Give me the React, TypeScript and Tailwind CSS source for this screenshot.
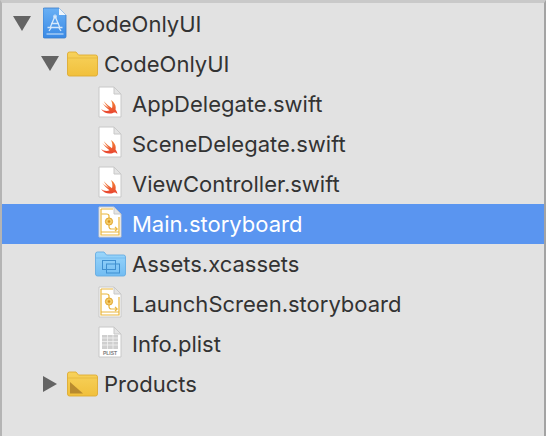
import React from 'react';

type Kind = 'project' | 'folder' | 'swift' | 'storyboard' | 'assets' | 'plist' | 'products';

interface Row {
  name: string;
  kind: Kind;
  indent: string;
  arrow?: 'down' | 'right';
  selected?: boolean;
}

const rows: Row[] = [
  { name: 'CodeOnlyUI', kind: 'project', indent: 'pl-[11px]', arrow: 'down' },
  { name: 'CodeOnlyUI', kind: 'folder', indent: 'pl-[39px]', arrow: 'down' },
  { name: 'AppDelegate.swift', kind: 'swift', indent: 'pl-[96px]' },
  { name: 'SceneDelegate.swift', kind: 'swift', indent: 'pl-[96px]' },
  { name: 'ViewController.swift', kind: 'swift', indent: 'pl-[96px]' },
  { name: 'Main.storyboard', kind: 'storyboard', indent: 'pl-[96px]', selected: true },
  { name: 'Assets.xcassets', kind: 'assets', indent: 'pl-[93px]' },
  { name: 'LaunchScreen.storyboard', kind: 'storyboard', indent: 'pl-[96px]' },
  { name: 'Info.plist', kind: 'plist', indent: 'pl-[96px]' },
  { name: 'Products', kind: 'products', indent: 'pl-[39px]', arrow: 'right' },
];

function Arrow({ dir }: { dir: 'down' | 'right' }) {
  return (
    <svg width="18" height="16" viewBox="0 0 18 16" className="shrink-0">
      {dir === 'down'
        ? <polygon points="0,0 18,0 9,15" fill="#646464" />
        : <polygon points="2,0 16,8 2,16" fill="#646464" />}
    </svg>
  );
}

function Page({ children }: { children?: React.ReactNode }) {
  return (
    <svg width="24" height="32" viewBox="0 0 24 32" className="shrink-0 mb-1">
      <path d="M1 1h15l7 7v23H1z" fill="#fff" stroke="#c8c8c8" />
      <path d="M16 1v7h7z" fill="#e4e4e4" stroke="#c8c8c8" />
      {children}
    </svg>
  );
}

function Icon({ kind }: { kind: Kind }) {
  if (kind === 'project') {
    return (
      <svg width="24" height="32" viewBox="0 0 24 32" className="shrink-0 mb-[2px]">
        <defs>
          <linearGradient id="proj" x1="0" y1="0" x2="0" y2="1">
            <stop offset="0" stopColor="#69b0f5" />
            <stop offset="1" stopColor="#3a8ae6" />
          </linearGradient>
        </defs>
        <path d="M1.500 1h14.500l7 7v21.500a1.500 1.500 0 0 1-1.500 1.500h-20a1.500 1.500 0 0 1-1.500-1.500v-28z" fill="url(#proj)" stroke="#3a7cc8" strokeWidth="0.800" />
        <path d="M16 1v7h7z" fill="#eef5fc" />
        <path d="M12 9L7 21M12 9l5 12M8 16.500h8M4.500 20.500h15M6 24l2-3M18 24l-2-3" fill="none" stroke="#d5e8fb" strokeWidth="1.300" />
        <circle cx="12" cy="9.500" r="1.500" fill="none" stroke="#d5e8fb" />
        <path d="M3.500 27h17" stroke="#d5e8fb" strokeWidth="1" />
      </svg>
    );
  }
  if (kind === 'swift') {
    return (
      <Page>
        <defs>
          <linearGradient id="swift" x1="0" y1="0" x2="0" y2="1">
            <stop offset="0" stopColor="#f58a3a" />
            <stop offset="1" stopColor="#e8402e" />
          </linearGradient>
        </defs>
        <path d="M13 14C16.500 16.500 18.500 20 17.500 23.500C19 25.500 19.500 27 19.200 28C18 26.500 16.500 26.300 15 26.900C11 28.600 6 27.300 3 23C5.500 24.800 9 25.600 11.500 24.300C8.500 22 6 19.400 4.200 17C6.200 18.800 9 20.900 11 22.200C9 20 7 17.500 5.800 15.300C8.300 18 11.500 20.700 14 22.300C14.800 19.500 14.300 16.500 13 14z" fill="url(#swift)" />
      </Page>
    );
  }
  if (kind === 'storyboard') {
    return (
      <Page>
        <path d="M3 3H15M3 3V29H21V11M3 26H21" fill="none" stroke="#e9b63c" strokeWidth="1.200" />
        <path d="M3.500 8h5c1.500 0 2.500 1 2.500 2v2M11 19v1.500c0 1.500 1 2.500 2.500 2.500h5.500M17 20.800l2.200 2.200-2.200 2.200" fill="none" stroke="#e9b63c" strokeWidth="1.200" />
        <circle cx="11" cy="15.500" r="3.600" fill="#f3cd6a" stroke="#e2a52e" />
        <circle cx="11" cy="15.500" r="1.300" fill="#d8931f" />
      </Page>
    );
  }
  if (kind === 'plist') {
    return (
      <Page>
        <path d="M4 9h16v14H4z" fill="#cfcfcf" />
        <path d="M4 12h16M4 15.500h16M4 19h16M9.500 9v14M15 9v14" stroke="#f2f2f2" strokeWidth="0.800" />
        <text x="12" y="29" textAnchor="middle" fontSize="5" fontWeight="700" fill="#7c7c7c" fontFamily="Liberation Sans, sans-serif">PLIST</text>
      </Page>
    );
  }
  const blue = kind === 'assets';
  return (
    <svg width="31" height="26" viewBox="0 0 31 26" className="shrink-0">
      <defs>
        <linearGradient id="folderY" x1="0" y1="0" x2="0" y2="1">
          <stop offset="0" stopColor="#f7d25c" />
          <stop offset="1" stopColor="#f1c03c" />
        </linearGradient>
        <linearGradient id="folderB" x1="0" y1="0" x2="0" y2="1">
          <stop offset="0" stopColor="#9ad6fb" />
          <stop offset="1" stopColor="#72bcf2" />
        </linearGradient>
      </defs>
      <path
        d="M.5 3a2 2 0 0 1 2-2h6.500l2.500 3h17a2 2 0 0 1 2 2v17a2 2 0 0 1-2 2h-26a2 2 0 0 1-2-2z"
        fill={blue ? 'url(#folderB)' : 'url(#folderY)'}
        stroke={blue ? '#66ade2' : '#dfab32'}
        strokeWidth="0.900"
      />
      <path d="M1 7h29" stroke={blue ? '#6fb8ec' : '#e4b640'} strokeWidth="0.800" />
      {blue && (
        <g fill="none" stroke="#3f8fd0" strokeWidth="1">
          <rect x="7.500" y="9.500" width="13" height="9" />
          <rect x="11.500" y="13" width="13" height="9" />
        </g>
      )}
      {kind === 'products' && <path d="M3 22.500V11l13 11.500z" fill="#b88a2e" />}
    </svg>
  );
}

export default function App() {
  return (
    <div className="w-[546px] h-[436px] overflow-hidden bg-[#e2e2e2] border-t-[3px] border-t-[#c9c9c9] border-l-2 border-l-[#b4b4b4] border-r-2 border-r-[#a3a3a3] font-['Inter',sans-serif]">
      <div className="pt-[1px]">
        {rows.map((row, i) => (
          <div
            key={i}
            className={`h-10 flex items-center ${row.indent} ${row.selected ? 'bg-[#5a95f0] text-white' : 'text-[#333333]'}`}
          >
            {row.arrow && <span className={row.kind === 'project' ? 'w-[30px] shrink-0' : 'w-[26px] shrink-0'}><Arrow dir={row.arrow} /></span>}
            <Icon kind={row.kind} />
            <span className={`text-[22px] leading-none whitespace-nowrap ${row.kind === 'folder' || row.kind === 'products' ? 'ml-[6px]' : row.kind === 'assets' ? 'ml-[6px]' : row.kind === 'project' ? 'ml-[9px]' : 'ml-[10px]'}`}>{row.name}</span>
          </div>
        ))}
      </div>
    </div>
  );
}
